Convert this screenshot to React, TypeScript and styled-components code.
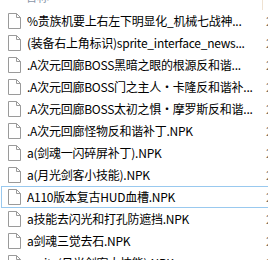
import styled, { createGlobalStyle } from "styled-components";

const GlobalStyle = createGlobalStyle`
  html, body {
    margin: 0;
    padding: 0;
    background: #fff;
    overflow: hidden;
  }
  body {
    font-family: "Noto Sans CJK SC", "Noto Sans", sans-serif;
    font-size: 12px;
    color: #000;
  }
`;

const List = styled.div`
  width: 268px;
  height: 260px;
  overflow: hidden;
`;

const Header = styled.div`
  display: flex;
  height: 23px;
  margin-top: -13px;
  width: 420px;
`;

const HeaderCell = styled.div<{ $w: number }>`
  width: ${(p) => p.$w}px;
  flex: none;
  box-sizing: border-box;
  padding: 3px 0 0 25px;
  color: #8a96a8;
  line-height: 14px;
  height: 23px;
  border-right: 1px solid #efe2d2;
`;

const Row = styled.div<{ $focus?: boolean }>`
  display: flex;
  align-items: center;
  box-sizing: border-box;
  height: 22px;
  width: 420px;
  margin-left: 1px;
  padding-left: 6px;
  border: 1px solid ${(p) => (p.$focus ? "#99c9ef" : "transparent")};
`;

const Name = styled.span`
  flex: none;
  width: 239px;
  margin-left: 3px;
  white-space: nowrap;
  overflow: hidden;
  line-height: 20px;
  letter-spacing: -0.25px;
`;

const Date = styled.span`
  flex: none;
  color: #6d6d6d;
  white-space: nowrap;
  line-height: 20px;
`;

const FileIcon = () => (
  <svg width="16" height="16" viewBox="0 0 16 16" style={{ flex: "none" }}>
    <path
      d="M0.5 0.5 H8.5 L12.5 4.5 V15.5 H0.5 Z"
      fill="#fff"
      stroke="#9a9a9a"
      strokeWidth="1"
    />
    <path d="M8.5 0.5 V4.5 H12.5" fill="none" stroke="#9a9a9a" strokeWidth="1" />
  </svg>
);

const files = [
  "%贵族机要上右左下明显化_机械七战神...",
  "(装备右上角标识)sprite_interface_news...",
  ".A次元回廊BOSS黑暗之眼的根源反和谐...",
  ".A次元回廊BOSS门之主人·卡隆反和谐补...",
  ".A次元回廊BOSS太初之惧·摩罗斯反和谐...",
  ".A次元回廊怪物反和谐补丁.NPK",
  "a(剑魂一闪碎屏补丁).NPK",
  "a(月光剑客小技能).NPK",
  "A110版本复古HUD血槽.NPK",
  "a技能去闪光和打孔防遮挡.NPK",
  "a剑魂三觉去石.NPK",
  "sprite(月光剑客大技能).NPK",
];

const App = () => {
  return (
    <>
      <GlobalStyle />
      <List>
        <Header>
          <HeaderCell $w={263}>名称</HeaderCell>
          <HeaderCell $w={140}>修改日期</HeaderCell>
        </Header>
        {files.map((f, i) => (
          <Row key={f} $focus={i === 8}>
            <FileIcon />
            <Name>{f}</Name>
            <Date>2019/5/12 10:30</Date>
          </Row>
        ))}
      </List>
    </>
  );
};

export default App;
